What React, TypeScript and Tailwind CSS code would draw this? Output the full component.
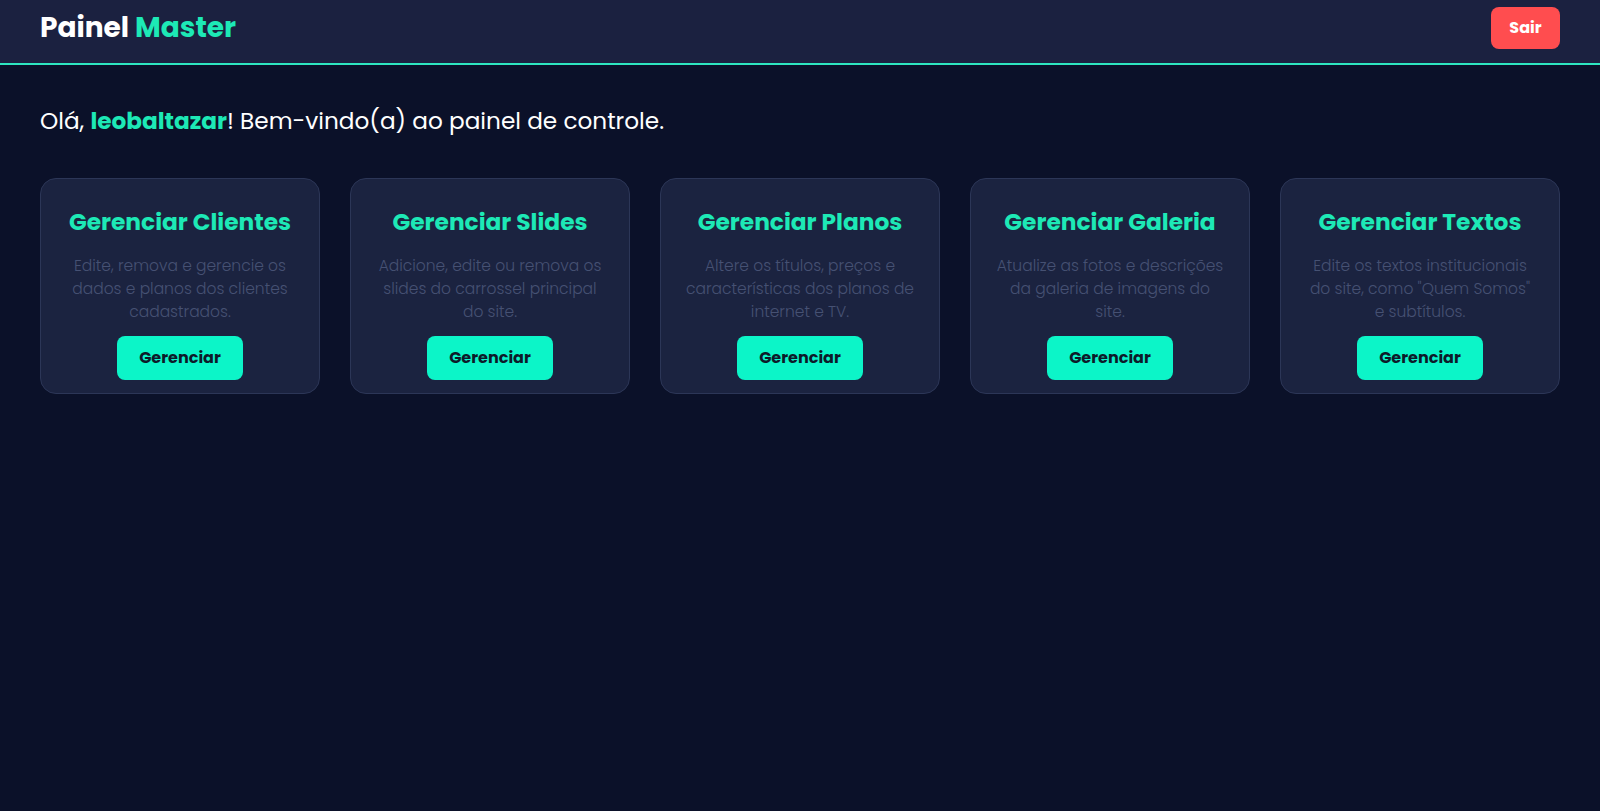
const cards = [
  {
    title: "Gerenciar Clientes",
    text: "Edite, remova e gerencie os dados e planos dos clientes cadastrados.",
  },
  {
    title: "Gerenciar Slides",
    text: "Adicione, edite ou remova os slides do carrossel principal do site.",
  },
  {
    title: "Gerenciar Planos",
    text: "Altere os títulos, preços e características dos planos de internet e TV.",
  },
  {
    title: "Gerenciar Galeria",
    text: "Atualize as fotos e descrições da galeria de imagens do site.",
  },
  {
    title: "Gerenciar Textos",
    text: 'Edite os textos institucionais do site, como "Quem Somos" e subtítulos.',
  },
];

const font = { fontFamily: "Poppins, Inter, 'Noto Sans', sans-serif" };

export default function App() {
  return (
    <div className="min-h-screen bg-[#0b1129] text-white" style={font}>
      <header className="flex h-[65px] items-center justify-between border-b-2 border-[#2ee6c0] bg-[#1b2140] px-10 pb-[7px]">
        <h1 className="text-[28px] font-bold">
          Painel <span className="text-[#1de9b6]">Master</span>
        </h1>
        <button className="h-[42px] w-[69px] rounded-lg bg-[#ff4d4f] text-[16px] font-bold text-white">
          Sair
        </button>
      </header>

      <main className="px-10 pt-[38px]">
        <p className="text-[23.2px] leading-9">
          Olá, <span className="font-bold text-[#1de9b6]">leobaltazar</span>! Bem-vindo(a) ao painel de controle.
        </p>

        <div className="mt-[39px] grid grid-cols-5 gap-[30px]">
          {cards.map((card, id) => (
            <div
              key={id}
              className="flex h-[216px] flex-col items-center rounded-2xl border border-[#2c3657] bg-[#1b2340] px-6 pt-[27px] text-center"
            >
              <h2 className="text-[23.3px] font-bold leading-8 text-[#1de9b6]">{card.title}</h2>
              <p className="mt-[16px] text-[15.5px] font-light leading-[23px] text-[#465173]">{card.text}</p>
              <button className="mt-[13px] h-[44px] w-[126px] rounded-lg bg-[#0cf5c8] text-[16px] font-bold text-[#0d1b2a]">
                Gerenciar
              </button>
            </div>
          ))}
        </div>
      </main>
    </div>
  );
}
